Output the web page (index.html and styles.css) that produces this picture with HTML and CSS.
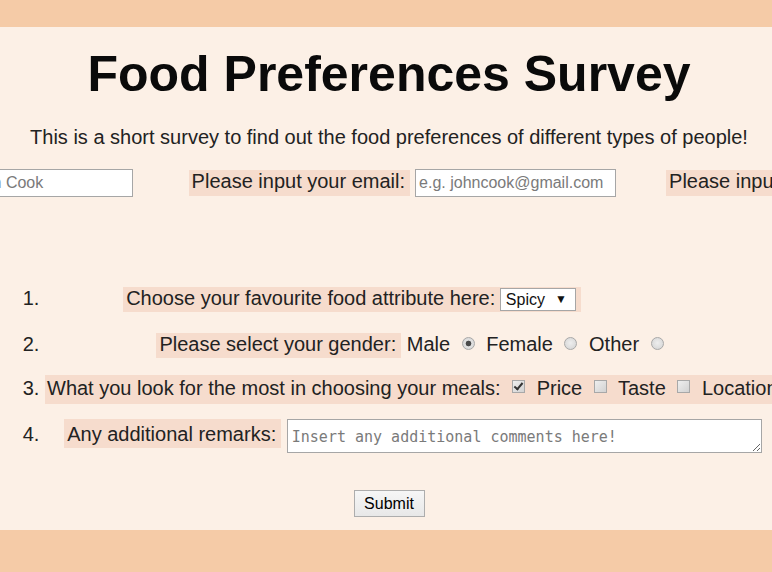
FILE: index.html
```html
<!DOCTYPE html>
<html lang="en">
<head>
<meta charset="utf-8">
<title>Food Preferences Survey</title>
<link rel="stylesheet" href="styles.css">
</head>
<body>
<div class="page">
  <h1 class="title">Food Preferences Survey</h1>
  <p class="intro">This is a short survey to find out the food preferences of different types of people!</p>
  <form class="survey">
    <div class="ident">
      <div class="field field-name"><label class="tag" for="name">Please input your name:</label><input class="text-input" id="name" type="text" placeholder="e.g. John Cook"></div>
      <div class="field field-email"><label class="tag" for="email">Please input your email:</label><input class="text-input" id="email" type="email" placeholder="e.g. johncook@gmail.com"></div>
      <div class="field field-age"><label class="tag" for="age">Please input your age:</label><input class="text-input text-input-age" id="age" type="text" placeholder="e.g. 25"></div>
    </div>
    <ol class="questions">
      <li class="q q1"><span class="tag tag-q1">Choose your favourite food attribute here: <span class="select-wrap"><select class="select"><option>Spicy</option><option>Sweet</option><option>Sour</option><option>Salty</option></select></span></span></li>
      <li class="q q2"><span class="tag tag-q2">Please select your gender:</span> Male <input class="radio" type="radio" name="g" checked> Female <input class="radio" type="radio" name="g"> Other <input class="radio" type="radio" name="g"></li>
      <li class="q q3"><span class="tag tag-q3">What you look for the most in choosing your meals: <input class="check" type="checkbox" checked> Price <input class="check" type="checkbox"> Taste <input class="check" type="checkbox"> Location <input class="check" type="checkbox"> Ambience</span></li>
      <li class="q q4"><span class="tag tag-q4">Any additional remarks:</span> <textarea class="remarks" placeholder="Insert any additional comments here!"></textarea></li>
    </ol>
    <div class="actions"><button class="submit" type="submit">Submit</button></div>
  </form>
</div>
</body>
</html>
```

FILE: styles.css
```css
html, body {
  margin: 0;
  padding: 0;
}

body {
  background: #f5cba7;
  font-family: "Liberation Sans", Arial, sans-serif;
  color: #222;
  overflow: hidden;
}

.page {
  margin-top: 27px;
  height: 503px;
  background: #fcf0e6;
  padding-left: 6px;
  overflow: hidden;
  box-sizing: border-box;
}

.title {
  margin: 0;
  padding-top: 18px;
  font-size: 50px;
  line-height: 58px;
  font-weight: bold;
  text-align: center;
  color: #0a0a0a;
}

.intro {
  margin: 23px 0 0;
  font-size: 20px;
  line-height: 23px;
  text-align: center;
}

.survey {
  margin: 0;
}

.ident {
  display: flex;
  justify-content: center;
  gap: 50px;
  margin-top: 20px;
  white-space: nowrap;
}

.field {
  display: flex;
  align-items: center;
  gap: 5px;
  flex: none;
}

.field-name {
  margin-right: 6px;
}

.tag {
  background: #f6dccd;
  font-size: 20px;
  padding: 0 5px 3px 3px;
}

.ident .tag {
  line-height: 23px;
}

.text-input {
  box-sizing: border-box;
  width: 201px;
  height: 28px;
  border: 1px solid #a6a6a6;
  background: #fff;
  font-family: "Liberation Sans", Arial, sans-serif;
  font-size: 16px;
  padding: 0 3px;
  margin: 0;
}

.text-input-age {
  width: 197px;
}

.text-input::placeholder,
.remarks::placeholder {
  color: #7a7a7a;
  opacity: 1;
}

.questions {
  margin: 79px 0 0;
  padding-left: 39px;
  width: 736px;
  font-size: 20px;
}

.q {
  line-height: 45px;
  text-align: center;
  white-space: nowrap;
}

.q1 {
  padding-right: 122px;
}

.q2 {
  margin-top: 1px;
}

.q3 {
  margin-top: -1px;
}

.q4 {
  margin-top: 1px;
}

.tag-q4 {
  padding-top: 4px;
}

.tag-q3 {
  padding: 2px 400px 5px 2px;
}

.select-wrap {
  position: relative;
  display: inline-block;
  vertical-align: middle;
  line-height: normal;
}

.select-wrap::after {
  content: "▼";
  position: absolute;
  right: 9px;
  top: 4px;
  font-size: 12px;
  color: #111;
  pointer-events: none;
}

.select {
  appearance: none;
  -webkit-appearance: none;
  box-sizing: border-box;
  width: 76px;
  height: 23px;
  margin: -2px 0 0 -1px;
  padding: 0 0 0 5px;
  border: 1px solid #a6a6a6;
  border-radius: 0;
  background: #fff;
  font-family: "Liberation Sans", Arial, sans-serif;
  font-size: 16px;
  color: #111;
  vertical-align: middle;
}

.radio {
  appearance: none;
  -webkit-appearance: none;
  box-sizing: border-box;
  width: 13px;
  height: 13px;
  margin: 0 6px;
  border: 1px solid #a8a8a8;
  border-radius: 50%;
  background: radial-gradient(circle at 50% 45%, #eeeeee 0, #d2d2d2 100%);
  vertical-align: 1px;
}

.radio:checked {
  background: radial-gradient(circle, #4a4a4a 0, #4a4a4a 2.5px, #e2e2e2 3.2px, #d2d2d2 100%);
}

.check {
  appearance: none;
  -webkit-appearance: none;
  position: relative;
  box-sizing: border-box;
  width: 13px;
  height: 13px;
  margin: 0 6px;
  border: 1px solid #a8a8a8;
  background: linear-gradient(135deg, #eeeeee, #d2d2d2);
  vertical-align: 2px;
}

.check:checked::after {
  content: "";
  position: absolute;
  left: 3px;
  top: 0;
  width: 3px;
  height: 7px;
  border: solid #333;
  border-width: 0 2px 2px 0;
  transform: rotate(40deg);
}

.remarks {
  box-sizing: border-box;
  width: 475px;
  height: 34px;
  margin: 0;
  padding: 7px 4px 3px;
  border: 1px solid #a6a6a6;
  background: #fff;
  font-family: "DejaVu Sans Mono", "Liberation Mono", monospace;
  font-size: 15px;
  line-height: 20px;
  vertical-align: middle;
}

.actions {
  text-align: center;
  margin-top: 33px;
}

.submit {
  box-sizing: border-box;
  width: 71px;
  height: 27px;
  padding: 0;
  border: 1px solid #adadad;
  border-radius: 0;
  background: linear-gradient(#f6f6f6, #e8e8e8);
  font-family: "Liberation Sans", Arial, sans-serif;
  font-size: 16px;
  color: #000;
}
```
